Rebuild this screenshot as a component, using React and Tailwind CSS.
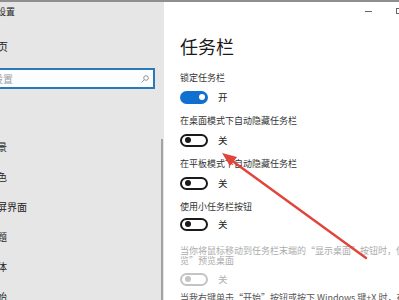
export default function App() {
  const Toggle = ({ state }) => {
    if (state === "on") {
      return (
        <div className="shrink-0 w-[28px] h-[13px] rounded-full bg-[#1170cf] flex items-center justify-end pr-[3px]">
          <div className="w-[6px] h-[6px] rounded-full bg-white" />
        </div>
      );
    }
    if (state === "disabled") {
      return (
        <div className="shrink-0 w-[28px] h-[13px] rounded-full border-2 border-[#c4c4c4] flex items-center pl-[3px]">
          <div className="w-[6px] h-[6px] rounded-full bg-[#c4c4c4]" />
        </div>
      );
    }
    return (
      <div className="shrink-0 w-[28px] h-[13px] rounded-full border-2 border-[#1a1a1a] flex items-center pl-[3px]">
        <div className="w-[6px] h-[6px] rounded-full bg-[#1a1a1a]" />
      </div>
    );
  };

  const ToggleRow = ({ state, label, mt }) => (
    <div className={`shrink-0 h-[14px] flex items-center gap-[10px] ${mt}`}>
      <Toggle state={state} />
      <span
        className={`text-[9.5px] leading-[12px] ${
          state === "disabled" ? "text-[#b0b0b0]" : "text-[#222]"
        }`}
      >
        {label}
      </span>
    </div>
  );

  const leftItems = ["背景", "颜色", "锁屏界面", "主题", "字体", "开始"];

  return (
    <div className="relative w-[399px] h-[300px] overflow-hidden bg-white font-['Noto_Sans_CJK_SC','Noto_Sans',sans-serif]">
      <div className="h-[2px] bg-[#8e8e8e]" />
      <div className="flex h-[298px]">
        <div className="w-[164px] bg-[#e6e6e6] flex">
          <div className="flex-1 flex flex-col overflow-hidden">
            <div className="shrink-0 mt-[5px] h-[10px] leading-[10px] text-[9px] text-[#222] ml-[-3px] whitespace-nowrap">
              设置
            </div>
            <div className="shrink-0 mt-[23px] h-[12px] leading-[12px] text-[11px] text-[#1a1a1a] ml-[-14px] whitespace-nowrap">
              主页
            </div>
            <div className="shrink-0 mt-[16px] ml-[-10px] w-[165px] h-[21px] border-2 border-[#2b78b8] bg-[#fbfdff] flex items-center justify-between pl-[1px] pr-[4px]">
              <span className="text-[10px] leading-[12px] text-[#a0a0a0] whitespace-nowrap">设置</span>
              <svg width="8" height="8" viewBox="0 0 8 8" fill="none" stroke="#8a8a8a" strokeWidth="0.9">
                <circle cx="5" cy="3" r="2.3" />
                <line x1="3.3" y1="4.7" x2="0.6" y2="7.4" />
              </svg>
            </div>
            <div className="shrink-0 mt-[52px] flex flex-col">
              {leftItems.map((t) => (
                <div key={t} className="shrink-0 h-[30px]">
                  <div className="ml-[-13px] text-[10px] leading-[12px] text-[#222] whitespace-nowrap">
                    {t}
                  </div>
                </div>
              ))}
            </div>
          </div>
          <div className="w-[2px] pt-[137px]">
            <div className="w-[2px] h-full bg-[#a3a3a3]" />
          </div>
          <div className="w-[1px]" />
        </div>

        <div className="flex-1 bg-white overflow-hidden flex flex-col">
          <div className="shrink-0 h-[18px] flex items-center justify-end gap-[24px]">
            <div className="w-[7px] h-[1px] bg-[#666]" />
            <div className="w-[7px] h-[6px] border border-[#666] mr-[-4px]" />
          </div>
          <div className="shrink-0 pl-[16px] flex flex-col">
            <div className="shrink-0 mt-[17px] h-[18px] text-[18px] leading-[18px] text-[#1a1a1a] whitespace-nowrap">
              任务栏
            </div>
            <div className="shrink-0 mt-[17px] h-[12px] text-[9px] leading-[12px] text-[#333] whitespace-nowrap">
              锁定任务栏
            </div>
            <ToggleRow state="on" label="开" mt="mt-[6px]" />
            <div className="shrink-0 mt-[11px] h-[12px] text-[9px] leading-[12px] text-[#333] whitespace-nowrap">
              在桌面模式下自动隐藏任务栏
            </div>
            <ToggleRow state="off" label="关" mt="mt-[6px]" />
            <div className="shrink-0 mt-[11px] h-[12px] text-[9px] leading-[12px] text-[#333] whitespace-nowrap">
              在平板模式下自动隐藏任务栏
            </div>
            <ToggleRow state="off" label="关" mt="mt-[6px]" />
            <div className="shrink-0 mt-[11px] h-[12px] text-[9px] leading-[12px] text-[#333] whitespace-nowrap">
              使用小任务栏按钮
            </div>
            <ToggleRow state="off" label="关" mt="mt-[4px]" />
            <div className="shrink-0 mt-[15px] text-[9px] leading-[10px] text-[#ababab] whitespace-nowrap">
              <div>当你将鼠标移动到任务栏末端的“显示桌面”按钮时，使用“速</div>
              <div>览”预览桌面</div>
            </div>
            <ToggleRow state="disabled" label="关" mt="mt-[6px]" />
            <div className="shrink-0 mt-[6px] h-[12px] text-[9px] leading-[12px] text-[#555] whitespace-nowrap">
              当我右键单击“开始”按钮或按下 Windows 键+X 时，在菜单中
            </div>
          </div>
        </div>
      </div>

      <svg className="absolute inset-0 pointer-events-none" width="399" height="300" viewBox="0 0 399 300">
        <line x1="231" y1="160" x2="366" y2="258" stroke="#e0443a" strokeWidth="2.4" strokeLinecap="round" />
        <polygon points="222,153 237,157 230,166" fill="#e0443a" />
      </svg>
    </div>
  );
}
